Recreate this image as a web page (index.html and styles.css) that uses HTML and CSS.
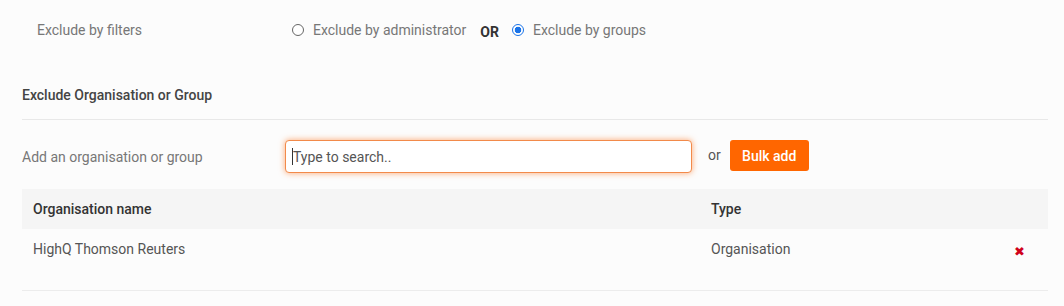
FILE: index.html
```html
<!DOCTYPE html>
<html lang="en">
<head>
    <meta charset="UTF-8">
    <title>Exclusions</title>
    <link rel="stylesheet" href="styles.css">
</head>
<body>
    <div class="panel">
        <div class="filter-row">
            <span class="filter-label">Exclude by filters</span>
            <div class="radios">
                <label class="radio"><span class="dot"></span>Exclude by administrator</label>
                <span class="or-big">OR</span>
                <label class="radio"><span class="dot checked"></span>Exclude by groups</label>
            </div>
        </div>

        <h4 class="section-title">Exclude Organisation or Group</h4>

        <div class="add-row">
            <span class="add-label">Add an organisation or group</span>
            <div class="search-box"><span class="caret"></span>Type to search..</div>
            <span class="or-small">or</span>
            <button class="bulk-btn">Bulk add</button>
        </div>

        <table class="list">
            <thead>
                <tr>
                    <th class="col-name">Organisation name</th>
                    <th class="col-type">Type</th>
                    <th class="col-act"></th>
                </tr>
            </thead>
            <tbody>
                <tr>
                    <td>HighQ Thomson Reuters</td>
                    <td>Organisation</td>
                    <td class="col-act"><span class="remove">&#x2716;</span></td>
                </tr>
            </tbody>
        </table>
    </div>
</body>
</html>
```

FILE: styles.css
```css
body {
    margin: 0;
    background: #fcfcfc;
    font-family: Roboto, "Liberation Sans", sans-serif;
    font-size: 14px;
    color: #555;
}
.panel {
    margin: 0 16px 0 22px;
}
.filter-row {
    display: flex;
    align-items: center;
    height: 60px;
    padding-left: 15px;
}
.filter-label {
    width: 255px;
    color: #777;
}
.radios {
    display: flex;
    align-items: center;
}
.radio {
    display: flex;
    align-items: center;
    color: #777;
}
.dot {
    width: 12px;
    height: 12px;
    border: 1px solid #666;
    border-radius: 50%;
    margin-right: 9px;
    box-sizing: border-box;
    background: #fff;
}
.dot.checked {
    border: 1px solid #1a73e8;
    background: radial-gradient(circle, #1a73e8 0 3px, #fff 3.6px);
}
.or-big {
    font-weight: bold;
    color: #333;
    margin: 4px 13px 0 14px;
}
.section-title {
    margin: 0;
    padding: 27px 0 16px;
    font-size: 14px;
    font-weight: 500;
    color: #444;
    border-bottom: 1px solid #e8e8e8;
}
.add-row {
    display: flex;
    align-items: center;
    padding: 20px 0 16px;
}
.add-label {
    width: 263px;
    color: #777;
}
.search-box {
    width: 407px;
    height: 33px;
    box-sizing: border-box;
    border: 1px solid #f28a4a;
    border-radius: 4px;
    background: #fff;
    box-shadow: 0 0 6px rgba(255, 110, 20, 0.6);
    display: flex;
    align-items: center;
    padding-left: 6px;
    color: #555;
}
.caret {
    width: 1px;
    height: 17px;
    background: #333;
}
.or-small {
    margin: -3px 9px 0 16px;
    color: #555;
}
.bulk-btn {
    background: #ff6600;
    color: #fff;
    border: none;
    border-radius: 3px;
    height: 31px;
    width: 79px;
    font-family: inherit;
    font-size: 14px;
    font-weight: 500;
    padding: 0;
    margin-top: -2px;
}
.list {
    width: 100%;
    border-collapse: collapse;
    border-bottom: 1px solid #ececec;
}
.list th {
    background: #f5f5f5;
    text-align: left;
    font-weight: 500;
    color: #333;
    height: 40px;
    padding: 0 0 0 11px;
}
.list td {
    height: 40px;
    padding: 0 0 21px 11px;
    color: #555;
}
.col-name {
    width: 667px;
}
.col-act {
    width: 34px;
}
.remove {
    color: #d0021b;
    font-size: 13px;
    position: relative;
    top: 2px;
}
```
